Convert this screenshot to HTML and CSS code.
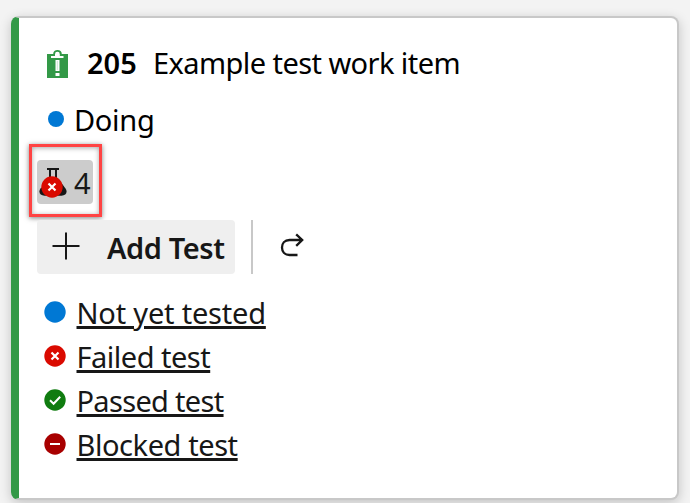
FILE: index.html
```html
<!DOCTYPE html>
<html lang="en">
<head>
<meta charset="utf-8">
<title>Work item card</title>
<link rel="stylesheet" href="styles.css">
</head>
<body>
<article class="card">
  <div class="content">
    <header class="title-row">
      <svg class="clipboard" width="22" height="28" viewBox="0 0 22 28">
        <path fill="#339947" d="M0 4h6.200C6.200 1.500 8 0 10.500 0S14.800 1.500 14.800 4H21v24H0z"/>
        <path fill="#fff" d="M4 6h4V4.200a2.400 2.400 0 0 1 4.800 0V6H16.500v2H4zM8.500 10h4v11h-4zM8.500 23h4v3h-4z"/>
        <path fill="#339947" opacity=".2" d="M9.800 11h1.200v9H9.800z"/>
      </svg>
      <span class="id">205</span>
      <span class="title">Example test work item</span>
    </header>
    <div class="state-row"><span class="state-dot"></span><span class="state">Doing</span></div>
    <div class="highlight">
      <div class="count-chip">
        <svg width="28" height="32" viewBox="0 0 28 32">
          <path d="M8 3h12M11 3v10M17 3v10" fill="none" stroke="#171717" stroke-width="2"/>
          <path fill="#171717" d="M7 18 1.500 22.500C-1 26 1 29.800 5.500 29.800h17C27 29.800 29 26 26.500 22.500L21 15z"/>
          <circle cx="13" cy="21" r="10.700" fill="#da0a00"/>
          <path d="m9.500 17.500 7 7m0-7-7 7" stroke="#fff" stroke-width="2.200"/>
        </svg>
        <span class="count">4</span>
      </div>
    </div>
    <div class="toolbar">
      <button class="add" type="button">
        <svg width="28" height="28" viewBox="0 0 28 28"><path d="M14 .5v27M.5 14h27" stroke="#171717" stroke-width="2"/></svg>
        <span class="add-label">Add Test</span>
      </button>
      <span class="divider"></span>
      <svg class="redo" width="24" height="24" viewBox="0 0 24 24"><path d="M17.500 22H9.500C4.500 22 2 18.500 2 14.500S4.500 7 9.500 7H22M16.200 1.300 22.200 7l-6 5.800" fill="none" stroke="#171717" stroke-width="2.300"/></svg>
    </div>
    <ul class="tests">
      <li><svg width="22" height="22" viewBox="0 0 22 22"><circle cx="11" cy="11" r="10.700" fill="#0078d4"/></svg><a class="t1">Not yet tested</a></li>
      <li><svg width="22" height="22" viewBox="0 0 22 22"><circle cx="11" cy="11" r="10.700" fill="#da0a00"/><path d="m7.500 7.500 7 7m0-7-7 7" stroke="#fff" stroke-width="2.200"/></svg><a class="t2">Failed test</a></li>
      <li><svg width="22" height="22" viewBox="0 0 22 22"><circle cx="11" cy="11" r="10.700" fill="#107c10"/><path d="m6 11.300 3.600 3.500 6.600-7" fill="none" stroke="#fff" stroke-width="2"/></svg><a class="t3">Passed test</a></li>
      <li><svg width="22" height="22" viewBox="0 0 22 22"><circle cx="11" cy="11" r="10.700" fill="#a80000"/><path d="M6 11h10" stroke="#fff" stroke-width="2"/></svg><a class="t4">Blocked test</a></li>
    </ul>
  </div>
</article>
</body>
</html>
```
FILE: styles.css
```css
* { box-sizing: border-box; }
body {
  margin: 0;
  height: 503px;
  padding: 16px 11px 3px;
  overflow: hidden;
  background: #f3f3f3;
  color: #000;
  font: 29px/44px "Noto Sans", sans-serif;
}
svg { display: block; flex: none; }
span, a { white-space: nowrap; }
.card {
  width: 668px;
  height: 484px;
  border-radius: 8px;
  overflow: hidden;
  background: #fff;
  border: 2px solid #c8c8c8;
  border-left: 8px solid #339947;
  box-shadow: 0 3px 12px rgba(0, 0, 0, .2);
}
.content { padding: 23px 0 0 18px; }
.title-row { display: flex; height: 44px; align-items: center; }
.clipboard { margin: 2px 18px 0 10px; }
.id { width: 66px; font-weight: 600; }
.title { letter-spacing: -.57px; }
.state-row { display: flex; height: 44px; margin-top: 13px; align-items: center; }
.state { letter-spacing: -.3px; }
.state-dot { width: 16px; height: 16px; margin: 0 10px 3px 11px; border-radius: 50%; background: #0078d4; }
.highlight {
  width: 73px;
  height: 73px;
  margin: 2px 0 0 -8px;
  padding: 13px 5px;
  border: 3px solid #ff4343;
  box-shadow: 0 1px 5px rgba(0, 0, 0, .5), inset 0 1px 5px rgba(0, 0, 0, .35);
}
.count-chip {
  display: flex;
  width: 56px;
  height: 44px;
  padding: 6px 0 0 2px;
  border-radius: 4px;
  background: #ccc;
  color: #171717;
}
.count { margin: -5px 0 0 7px; }
.toolbar { display: flex; height: 54px; margin-top: 3px; align-items: center; color: #171717; }
.add {
  display: flex;
  width: 198px;
  height: 54px;
  padding: 0 0 0 15px;
  align-items: center;
  border: 0;
  border-radius: 4px;
  background: #efefef;
  color: inherit;
  font: inherit;
  font-weight: 600;
}
.add svg { margin-bottom: 2px; }
.add-label { margin: 2px 0 0 27px; letter-spacing: -.4px; }
.divider { width: 2px; height: 54px; margin-left: 16px; background: #c8c8c8; }
.redo { margin: 0 0 4px 27px; }
.tests { list-style: none; margin: 17px 0 0; padding: 0 0 0 7px; color: #171717; }
.tests li { display: flex; height: 44px; align-items: center; }
.tests svg { margin: 0 11px 2px 0; }
.tests a { margin-left: -.5px; text-decoration: underline; text-decoration-thickness: 3px; text-underline-offset: 2px; }
.t1 { letter-spacing: -.2px; }
.t2 { letter-spacing: -.5px; }
.t3 { letter-spacing: -.68px; }
.t4 { letter-spacing: -.42px; }
```
